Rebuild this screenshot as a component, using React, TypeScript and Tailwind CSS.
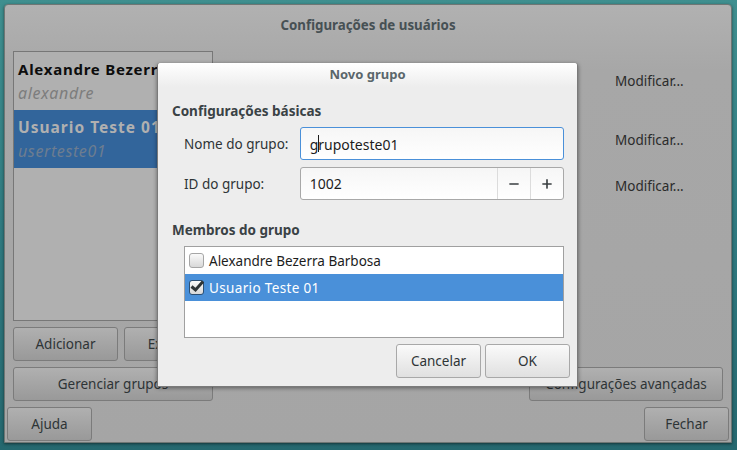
import React from 'react'
import { Minus, Plus } from 'lucide-react'

const font = "font-['Noto_Sans','Open_Sans',sans-serif]"

function DimButton({ className, children }: { className: string; children?: React.ReactNode }) {
  return (
    <div className={`flex items-center justify-center rounded-[3px] border border-[#7b7b7b] bg-linear-to-b from-[#b0b0b0] to-[#999999] pt-px text-[13.5px] text-[#2e3436] ${className}`}>
      {children}
    </div>
  )
}

function DialogButton({ children }: { children: React.ReactNode }) {
  return (
    <div className="flex h-[34px] w-[85px] items-center justify-center rounded-[3px] border border-[#a8a8a8] bg-linear-to-b from-[#fafafa] to-[#e0e0e0] pt-px text-[13.5px] text-[#2e3436]">
      {children}
    </div>
  )
}

function ModifyLabel({ className }: { className: string }) {
  return <div className={`text-[13.5px] leading-[18px] text-[#2b2b2b] ${className}`}>Modificar...</div>
}

export default function App() {
  return (
    <div className={`relative h-[450px] w-[737px] overflow-hidden bg-linear-to-b from-[#3f8f8f] via-[#2f7a80] to-[#25686f] pl-[4px] pt-1 ${font}`}>
      {/* janela de fundo */}
      <div className="flex h-[439px] w-[728px] flex-col rounded-t-[4px] border border-[#6f7674] bg-linear-to-b from-[#b1b1b1] from-0% via-[#a7a7a7] via-15% to-[#a5a5a5] shadow-[0_1px_3px_rgba(0,0,0,0.5)]">
        <div className="flex h-[41px] items-center justify-center text-[13.3px] font-bold text-[#465054]">
          Configurações de usuários
        </div>

        <div className="flex flex-1 pl-[8px] pr-[7px]">
          <div className="flex w-[200px] shrink-0 flex-col pt-[5px]">
            <div className="h-[270px] border border-[#777777] bg-[#b0b0b0]">
              <div className="flex h-[58px] flex-col justify-center pl-1">
                <div className="whitespace-nowrap text-[15px] leading-[24px] font-bold tracking-[0.75px] text-[#0d0d0d]">Alexandre Bezerra Barbosa</div>
                <div className="text-[16px] leading-[24px] tracking-[0.6px] text-[#7d7d7d] italic">alexandre</div>
              </div>
              <div className="flex h-[58px] flex-col justify-center bg-[#32659b] pl-1">
                <div className="whitespace-nowrap text-[15.5px] leading-[24px] font-bold tracking-[1px] text-[#b0b0b0]">Usuario Teste 01</div>
                <div className="text-[16px] leading-[24px] tracking-[0.6px] text-[#6d7d90] italic">userteste01</div>
              </div>
            </div>
            <div className="mt-[6px] flex gap-[6px]">
              <DimButton className="h-[34px] w-[105px]">Adicionar</DimButton>
              <DimButton className="h-[34px] flex-1">Excluir</DimButton>
            </div>
            <DimButton className="mt-[6px] h-[34px] w-[200px]">Gerenciar grupos</DimButton>
          </div>

          <div className="relative flex flex-1 flex-col pl-[402px]">
            <ModifyLabel className="mt-[26px]" />
            <ModifyLabel className="mt-[41px]" />
            <ModifyLabel className="mt-[28px]" />
          </div>
        </div>

        <div className="relative">
          <DimButton className="absolute right-[8px] bottom-[41px] h-[34px] w-[194px]">Configurações avançadas</DimButton>
          <div className="flex justify-between px-[2px] pb-[1px]">
            <DimButton className="h-[34px] w-[85px]">Ajuda</DimButton>
            <DimButton className="h-[34px] w-[85px]">Fechar</DimButton>
          </div>
        </div>
      </div>

      {/* dialogo */}
      <div className="absolute top-[63px] left-[157px] flex h-[324px] w-[421px] flex-col rounded-t-[3px] border-r border-b border-l border-[#7a7a7a] bg-[#ededed] shadow-[0_1px_4px_rgba(0,0,0,0.45)]">
        <div className="flex h-[24px] shrink-0 items-center justify-center rounded-t-[3px] bg-linear-to-b from-[#ffffff] to-[#ededed] text-[13px] font-bold text-[#5a666b]">
          Novo grupo
        </div>

        <div className="pl-[14px] pr-[13px]">
          <div className="mt-[15px] text-[13.5px] leading-[18px] font-bold text-[#3a4245]">Configurações básicas</div>

          <div className="mt-[7px] flex items-center pl-[12px]">
            <div className="w-[116px] pt-[2px] text-[13.5px] text-[#2e3436]">Nome do grupo:</div>
            <div className="flex h-[33px] w-[265px] items-center rounded-[3px] border border-[#4a90d9] bg-linear-to-b from-[#f6f6f6] to-white pl-[9px] pt-px text-[14px] text-[#1c1c1c]">
              <span className="relative">
                grupoteste01
                <span className="absolute top-[1px] left-[8px] h-[17px] w-px bg-[#1c1c1c]" />
              </span>
            </div>
          </div>

          <div className="mt-[7px] flex items-center pl-[12px]">
            <div className="w-[116px] pt-px text-[13.5px] text-[#2e3436]">ID do grupo:</div>
            <div className="flex h-[33px] w-[265px] items-center rounded-[3px] border border-[#a8a8a8] bg-linear-to-b from-[#f6f6f6] to-white text-[14px] text-[#1c1c1c]">
              <div className="flex-1 pl-[9px]">1002</div>
              <div className="flex h-full w-[33px] items-center justify-center border-l border-[#dcdcdc]">
                <Minus size={14} strokeWidth={2.8} className="text-[#3a3f41]" />
              </div>
              <div className="flex h-full w-[33px] items-center justify-center border-l border-[#dcdcdc]">
                <Plus size={14} strokeWidth={2.8} className="text-[#3a3f41]" />
              </div>
            </div>
          </div>

          <div className="mt-[21px] text-[13.5px] leading-[18px] font-bold text-[#3a4245]">Membros do grupo</div>

          <div className="mt-[7px] ml-[12px] h-[92px] w-[380px] border border-[#a0a0a0] bg-white text-[13.5px]">
            <div className="flex h-[27px] items-center pl-[4px] text-[#1c1c1c]">
              <div className="h-[15px] w-[15px] rounded-[3px] border border-[#a6a6a6] bg-linear-to-b from-[#fafafa] to-[#d8d8d8]" />
              <span className="ml-[5px] pt-px">Alexandre Bezerra Barbosa</span>
            </div>
            <div className="flex h-[27px] items-center bg-[#4a90d9] pl-[4px] text-white">
              <div className="relative h-[15px] w-[15px] rounded-[3px] border border-[#2c4f73] bg-linear-to-b from-[#fafafa] to-[#d8d8d8]">
                <svg viewBox="0 0 16 16" className="absolute -top-[3px] -left-[1px] h-[16px] w-[16px]">
                  <path d="M2.5 8.5 L6.5 12 L14 3.5" fill="none" stroke="#2e3436" strokeWidth="3" />
                </svg>
              </div>
              <span className="ml-[5px] pt-px tracking-[0.35px]">Usuario Teste 01</span>
            </div>
          </div>
        </div>

        <div className="mt-[6px] flex justify-end gap-[4px] pr-[7px]">
          <DialogButton>Cancelar</DialogButton>
          <DialogButton>OK</DialogButton>
        </div>
      </div>
    </div>
  )
}
